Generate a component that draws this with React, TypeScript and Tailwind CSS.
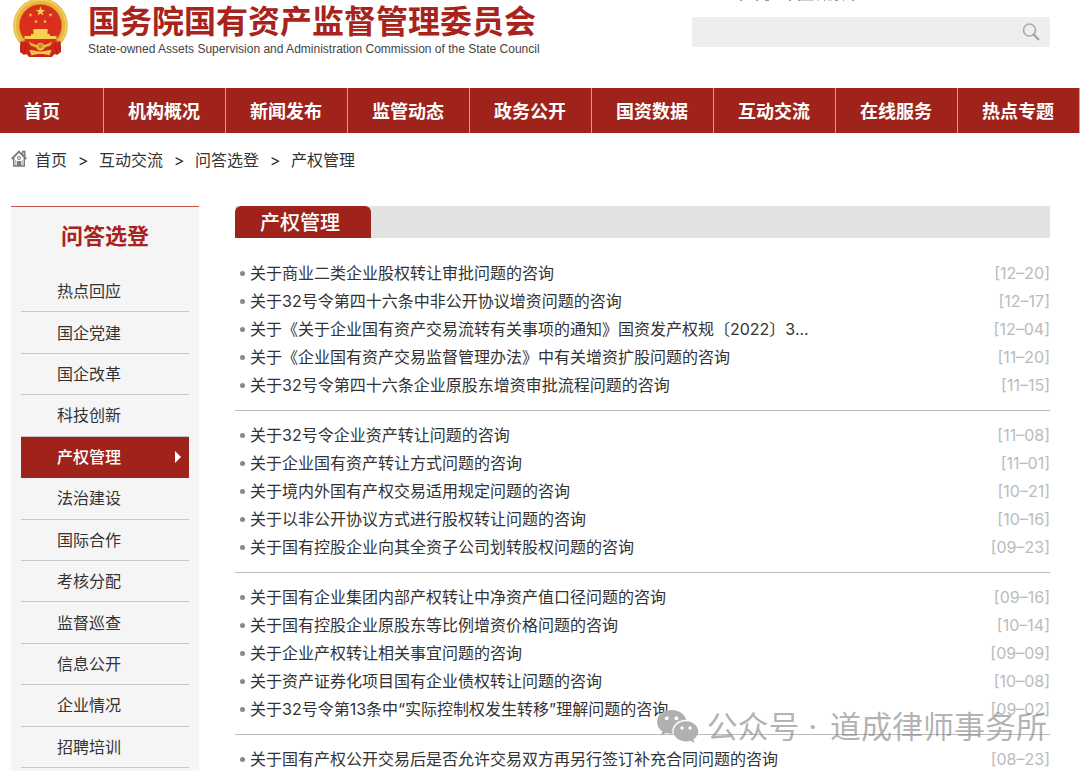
const NAV_ITEMS = [
  "机构概况",
  "新闻发布",
  "监管动态",
  "政务公开",
  "国资数据",
  "互动交流",
  "在线服务",
  "热点专题",
];

const CRUMBS = ["首页", "互动交流", "问答选登", "产权管理"];

const SIDE_ITEMS = [
  "热点回应",
  "国企党建",
  "国企改革",
  "科技创新",
  "产权管理",
  "法治建设",
  "国际合作",
  "考核分配",
  "监督巡查",
  "信息公开",
  "企业情况",
  "招聘培训",
];

const ACTIVE_ITEM = "产权管理";

const GROUPS = [
  [
    { title: "关于商业二类企业股权转让审批问题的咨询", date: "12–20" },
    { title: "关于32号令第四十六条中非公开协议增资问题的咨询", date: "12–17" },
    {
      title: "关于《关于企业国有资产交易流转有关事项的通知》国资发产权规〔2022〕3...",
      date: "12–04",
    },
    {
      title: "关于《企业国有资产交易监督管理办法》中有关增资扩股问题的咨询",
      date: "11–20",
    },
    { title: "关于32号令第四十六条企业原股东增资审批流程问题的咨询", date: "11–15" },
  ],
  [
    { title: "关于32号令企业资产转让问题的咨询", date: "11–08" },
    { title: "关于企业国有资产转让方式问题的咨询", date: "11–01" },
    { title: "关于境内外国有产权交易适用规定问题的咨询", date: "10–21" },
    { title: "关于以非公开协议方式进行股权转让问题的咨询", date: "10–16" },
    { title: "关于国有控股企业向其全资子公司划转股权问题的咨询", date: "09–23" },
  ],
  [
    { title: "关于国有企业集团内部产权转让中净资产值口径问题的咨询", date: "09–16" },
    { title: "关于国有控股企业原股东等比例增资价格问题的咨询", date: "10–14" },
    { title: "关于企业产权转让相关事宜问题的咨询", date: "09–09" },
    { title: "关于资产证券化项目国有企业债权转让问题的咨询", date: "10–08" },
    { title: "关于32号令第13条中“实际控制权发生转移”理解问题的咨询", date: "09–02" },
  ],
  [
    {
      title: "关于国有产权公开交易后是否允许交易双方再另行签订补充合同问题的咨询",
      date: "08–23",
    },
  ],
];

export default function App() {
  return (
    <div className="relative flex h-screen flex-col overflow-hidden bg-white font-['Inter','Noto_Sans_CJK_SC',sans-serif] text-base text-[#333]">
      <Header />
      <NavBar />
      <Breadcrumb />
      <div className="flex min-h-0 flex-1 pr-[30px] pl-[11px]">
        <Sidebar />
        <Articles />
      </div>
      <Watermark />
    </div>
  );
}

function Header() {
  return (
    <header className="flex h-22 shrink-0 items-start justify-between pr-[30px] pl-3">
      <div className="flex items-start">
        <Emblem />
        <div className="ml-[19px] pt-1">
          <h1 className="text-[32px] leading-9 font-bold text-[#a8231b]">
            国务院国有资产监督管理委员会
          </h1>
          <p className="font-['Liberation_Sans',sans-serif] text-xs leading-[18px] whitespace-nowrap text-[#444]">
            State-owned Assets Supervision and Administration Commission of the
            State Council
          </p>
        </div>
      </div>
      <div className="w-[358px]">
        <svg viewBox="0 0 358 17" className="h-[17px] w-full">
          <path
            d="M48 0h2M64 0h2M73 0h4M97 0h2M106 0h2M132 0h1M143 0h3M151 0h1M160 0h2"
            stroke="#999"
            strokeWidth="2"
          />
          <path
            d="M108 0h14M125 0h2M136 0h4"
            stroke="#d0d0d0"
            strokeWidth="2"
          />
        </svg>
        <form className="flex h-[30px] bg-[#eee]">
          <input
            type="text"
            aria-label="搜索"
            className="min-w-0 flex-1 bg-transparent px-3 text-sm outline-none"
          />
          <button type="button" aria-label="搜索" className="px-[10px]">
            <svg viewBox="0 0 18 18" className="h-[18px] w-[18px]" fill="none">
              <circle cx="7.5" cy="7" r="6" stroke="#aaa" strokeWidth="1.6" />
              <path
                d="M11.8 11.6l4.6 4.8"
                stroke="#999"
                strokeWidth="2"
                strokeLinecap="round"
              />
            </svg>
          </button>
        </form>
      </div>
    </header>
  );
}

function NavBar() {
  return (
    <nav className="flex h-[45px] shrink-0 bg-[#9f231a] text-lg font-bold text-white">
      <a
        href="#"
        className="flex w-[104px] items-center border-r border-[#d59b97] pt-[2px] pl-6"
      >
        首页
      </a>
      {NAV_ITEMS.map((item) => (
        <a
          key={item}
          href="#"
          className="flex flex-1 items-center justify-center border-r border-[#d59b97] pt-[2px] pr-px"
        >
          {item}
        </a>
      ))}
    </nav>
  );
}

function Breadcrumb() {
  return (
    <div className="flex h-[73px] shrink-0 items-start pt-[15px] pl-[11px] leading-6">
      <HomeIcon />
      {CRUMBS.map((crumb, i) => (
        <span key={crumb} className="flex">
          {i > 0 && <span className="w-8 text-center">&gt;</span>}
          <a href="#">{crumb}</a>
        </span>
      ))}
    </div>
  );
}

function Sidebar() {
  return (
    <aside className="w-[188px] shrink-0 border-t border-[#c9544d] bg-[#f5f5f5] px-[10px]">
      <h2 className="flex h-16 items-center justify-center pb-[6px] text-[22px] font-bold text-[#a8231b]">
        问答选登
      </h2>
      <ul className="grid h-[497px] grid-rows-12">
        {SIDE_ITEMS.map((item) =>
          item === ACTIVE_ITEM ? (
            <li key={item} className="bg-[#9f231a] text-white">
              <a
                href="#"
                className="flex h-full items-center justify-between pr-2 pl-9 font-medium"
              >
                {item}
                <svg viewBox="0 0 6 12" className="h-3 w-[6px]">
                  <path d="M0 0l6 6-6 6z" fill="#fff" />
                </svg>
              </a>
            </li>
          ) : (
            <li key={item} className="border-b border-[#c8c8c8]">
              <a href="#" className="flex h-full items-center pl-9">
                {item}
              </a>
            </li>
          )
        )}
      </ul>
    </aside>
  );
}

function Articles() {
  return (
    <main className="ml-9 min-w-0 flex-1">
      <div className="flex h-8 bg-[#e2e2e2]">
        <h2 className="flex w-34 items-center justify-center rounded-t-md bg-[#9f231a] pt-[2px] pr-[6px] text-xl font-medium text-white">
          产权管理
        </h2>
      </div>
      <div className="pt-[21px]">
        {GROUPS.map((group, i) => (
          <ul
            key={i}
            className="mb-[11px] border-[#bbb] not-first:border-t not-first:pt-[10px]"
          >
            {group.map((row) => (
              <li key={row.title} className="flex h-7 items-center pl-[5px]">
                <span className="mr-[5px] h-[5px] w-[5px] rounded-full bg-[#888]" />
                <a href="#" className="flex-1 truncate">
                  {row.title}
                </a>
                <span className="text-[#bbb]">[{row.date}]</span>
              </li>
            ))}
          </ul>
        ))}
      </div>
    </main>
  );
}

function Watermark() {
  return (
    <div className="pointer-events-none absolute right-[33px] bottom-6 flex items-center text-[31px] leading-10 whitespace-pre text-[#808080]/60">
      <svg viewBox="0 0 42 36" className="mr-2 h-9 w-[42px]">
        <path
          fill="#b0b0b0"
          fillRule="evenodd"
          d="M14.5 1C6.500 1 0 6.300 0 13c0 3.800 2.100 7.100 5.300 9.300L4 26.500l5-2.600c1.700.5 3.600.8 5.500.8h1.200A11 11 0 0 1 15.300 22c0-6.300 6-11.300 13.400-11.300h.6C27.800 5.200 21.700 1 14.500 1zM9.700 7.300a2 2 0 1 1 0 4 2 2 0 0 1 0-4zm9.700 0a2 2 0 1 1 0 4 2 2 0 0 1 0-4z"
        />
        <path
          fill="#b0b0b0"
          fillRule="evenodd"
          d="M29 12.200c-6.900 0-12.400 4.500-12.400 10.100S22.100 32.400 29 32.400c1.500 0 3-.2 4.300-.6l4.200 2.300-1.100-3.700c3-1.900 4.900-4.800 4.900-8.100 0-5.600-5.500-10.100-12.300-10.100zM25 17.300a1.700 1.700 0 1 1 0 3.400 1.700 1.700 0 0 1 0-3.400zm8 0a1.700 1.700 0 1 1 0 3.400 1.700 1.700 0 0 1 0-3.400z"
        />
      </svg>
      <span className="mr-1">公众号 · </span>
      <span>道成律师事务所</span>
    </div>
  );
}

function HomeIcon() {
  return (
    <svg
      viewBox="0 0 16 17"
      className="mt-[2px] mr-2 h-[17px] w-4"
      fill="none"
      stroke="#777"
    >
      <path d="M.7 9L8 1.6 15.3 9" strokeWidth="1.8" />
      <path d="M11.8 4.5V1.500h2v5" strokeWidth="1.4" />
      <path d="M2.700 8v8h10.600V8" strokeWidth="1.4" />
      <path d="M6.300 16v-4.500h3.400V16" fill="#777" />
      <path d="M4.700 10v5M11.300 10v5" stroke="#aaa" />
      <circle cx="8" cy="8" r="1.5" />
    </svg>
  );
}

const STAR =
  "M0 -5L1.2 -1.6 4.8 -1.5 1.9 .6 2.900 4 0 2 -2.900 4 -1.9 .6 -4.800 -1.5 -1.2 -1.6z";

function Emblem() {
  return (
    <svg viewBox="0 0 57 58" className="h-[58px] w-[57px]">
      <path d="M9 38l-1 12 3 4 3-1 3 4h23l3-4 3 1 3-4-1-12z" fill="#c9261c" />
      <circle cx="28.5" cy="25.5" r="25" fill="#dc2e1f" />
      <circle
        cx="28.5"
        cy="25.5"
        r="24.3"
        fill="none"
        stroke="#e8b83e"
        strokeWidth="6"
      />
      <circle
        cx="28.5"
        cy="25.5"
        r="25.5"
        fill="none"
        stroke="#f2cf62"
        strokeWidth="1.6"
      />
      <circle
        cx="28.5"
        cy="25.5"
        r="21.3"
        fill="none"
        stroke="#cf9428"
        strokeWidth=".7"
      />
      <g fill="#f7d14f">
        <path d={STAR} transform="translate(28.500 11.500)" />
        <path d={STAR} transform="translate(18.500 15) scale(.42)" />
        <path d={STAR} transform="translate(38.500 15) scale(.42)" />
        <path d={STAR} transform="translate(24 21.500) scale(.42)" />
        <path d={STAR} transform="translate(33 21.500) scale(.42)" />
        <path d="M22 29h13l1.5 2h-16zM21.500 31h14v3h-14z" />
        <path d="M19 34h19v2h6.500v3h-32v-3H19z" />
      </g>
      <path d="M11 40.500h35l-4 4H15z" fill="#dc2e1f" />
      <path
        d="M8.500 41c6 1 9 3 12 4l4-2.500h8l4 2.500c3-1 6-3 12-4l.5 11-4 3-2-1-3 2H17l-3-2-2 1-4-3z"
        fill="#cf261b"
      />
      <path
        d="M17 41.500c3 2 5 2.500 7.500 3.500a4.800 4.800 0 0 1 8 0c2.500-1 4.500-1.500 7.500-3.500l-1.500 4-5.500 2a4.800 4.800 0 0 1-9 0l-5.500-2z"
        fill="#e8b83e"
      />
      <circle cx="28.5" cy="46" r="2.200" fill="#d08a24" />
      <path
        d="M17.500 50c5 0 7 1.500 11 1.500s6-1.500 11-1.500l-2 5.500c-3-1-5-1.500-9-1.500s-6 .5-9 1.500z"
        fill="#efc547"
      />
      <path
        d="M14 44l-2 9M43 44l2 9M10 43l-1 7M47 43l1 7"
        stroke="#a91a14"
        strokeWidth=".8"
        fill="none"
      />
    </svg>
  );
}
